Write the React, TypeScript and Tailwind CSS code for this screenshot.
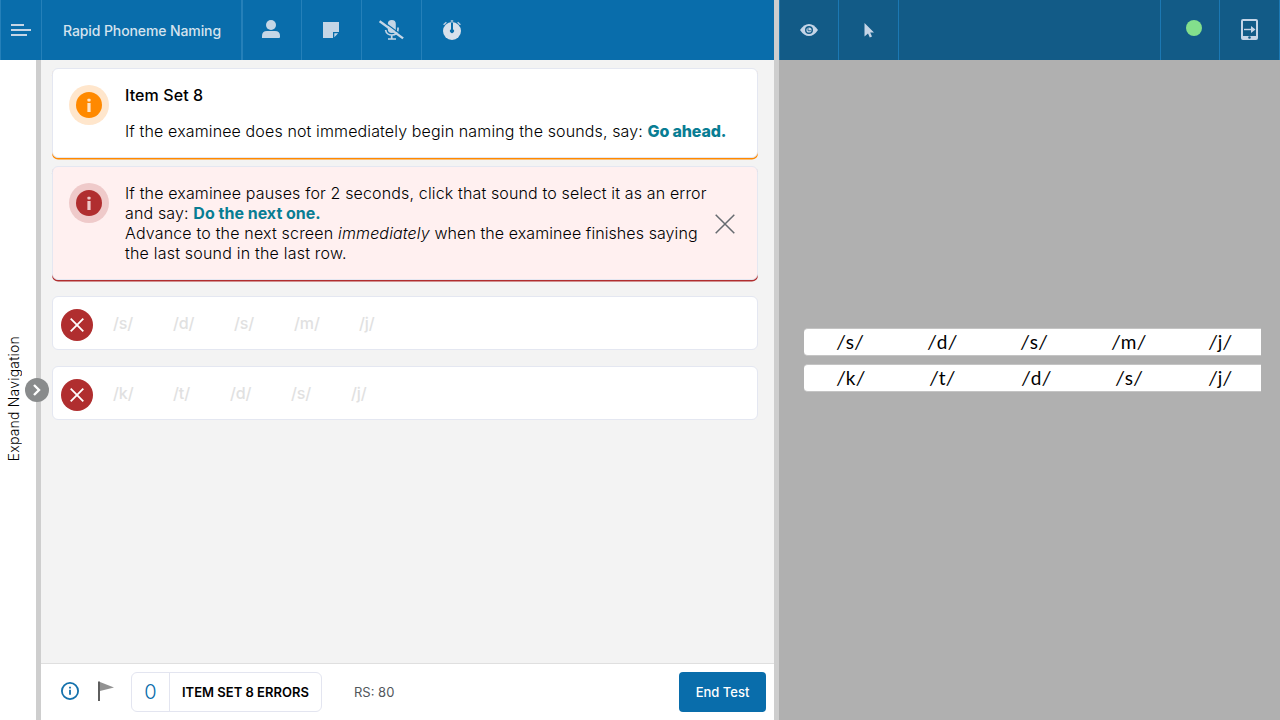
import React from 'react';

type Sound = { text: string; width: string };

const firstRow: Sound[] = [
  { text: '/s/', width: 'w-[60px]' },
  { text: '/d/', width: 'w-[61px]' },
  { text: '/s/', width: 'w-[60px]' },
  { text: '/m/', width: 'w-[65px]' },
  { text: '/j/', width: 'w-[30px]' },
];

const secondRow: Sound[] = [
  { text: '/k/', width: 'w-[60px]' },
  { text: '/t/', width: 'w-[57px]' },
  { text: '/d/', width: 'w-[61px]' },
  { text: '/s/', width: 'w-[60px]' },
  { text: '/j/', width: 'w-[30px]' },
];

function InfoBadge({ halo, fill, mark }: { halo: string; fill: string; mark: string }) {
  return (
    <div className={`flex size-10 shrink-0 items-center justify-center rounded-full ${halo}`}>
      <svg width="26" height="26" viewBox="0 0 26 26" className={fill}>
        <circle cx="13" cy="13" r="13" fill="currentColor" />
        <g className={mark} fill="currentColor">
          <rect x="11.4" y="6.8" width="3.2" height="2.8" rx="0.8" />
          <rect x="11.4" y="11" width="3.2" height="9" />
        </g>
      </svg>
    </div>
  );
}

function SoundRow({ sounds }: { sounds: Sound[] }) {
  return (
    <div className="flex h-[54px] items-center rounded-md border border-[#e4e7f1] bg-white pl-2">
      <button className="mt-[3px] flex size-8 shrink-0 items-center justify-center rounded-full bg-[#b02e2f]">
        <svg width="14" height="14" viewBox="0 0 14 14" stroke="#fff" strokeWidth="1.8">
          <path d="M.7.7l12.6 12.6M13.3.7L.7 13.3" />
        </svg>
      </button>
      <div className="ml-5 flex text-[16px] leading-5 font-medium tracking-[-0.1px] text-[#e1e1e1]">
        {sounds.map((s, i) => (
          <span key={i} className={s.width}>{s.text}</span>
        ))}
      </div>
    </div>
  );
}

function StimulusRow({ items }: { items: Sound[] }) {
  return (
    <div className="flex h-7 w-[457px] items-center rounded-l-[4px] border-y border-y-[#c4c4c4] bg-white pl-[33px] font-['Lato',sans-serif] text-[19px] leading-6 tracking-[0.9px] text-black">
      {items.map((s, i) => (
        <span key={i} className={`${s.width} shrink-0 whitespace-nowrap`}>
          <i>/</i>
          {s.text.slice(1, -1)}
          <i>/</i>
        </span>
      ))}
    </div>
  );
}

function TopBar() {
  return (
    <header className="flex h-[60px] shrink-0 bg-[#096dab] text-[#c5d6e6]">
      <div className="flex w-[42px] items-center border-x border-[#2580b9] pl-[10px]">
        <svg width="20" height="12" viewBox="0 0 20 12" fill="currentColor">
          <path d="M0 0h13v2H0zM0 5h20v2H0zM0 10h16v2H0z" />
        </svg>
      </div>
      <div className="flex w-[201px] items-center border-r-2 border-[#2580b9] pt-px pl-[21px] text-[14px] font-medium tracking-[-0.1px] whitespace-nowrap text-[#d5e3ee]">
        Rapid Phoneme Naming
      </div>
      <div className="flex w-[59px] items-center justify-center border-r border-[#2580b9] pr-[2px] pb-[2px]">
        <svg width="18" height="18" viewBox="0 0 18 18" fill="currentColor">
          <circle cx="9" cy="5" r="5" />
          <path d="M0 18v-2q0-5 5-5h8q5 0 5 5v1q0 1-1 1z" />
        </svg>
      </div>
      <div className="flex w-[60px] items-center justify-center border-r border-[#2580b9] pr-px">
        <svg width="16" height="16" viewBox="0 0 16 16" fill="currentColor">
          <path d="M0 0h16v10h-6v6H0z" />
          <path d="M11.3 15.2v-3.9h3.9z" />
        </svg>
      </div>
      <div className="flex w-[60px] items-center justify-center border-r border-[#2580b9] pr-px">
        <svg width="25" height="20" viewBox="0 0 25 20" fill="none" stroke="currentColor">
          <rect x="8.8" y="0" width="8" height="13" rx="4" fill="currentColor" stroke="none" />
          <path d="M6.6 10c.8 6.8 12.4 6.8 12.4-.8V7.5M12.7 15v3.5M9 19h8" strokeWidth="1.7" />
          <path d="M2.3 0l23 17" stroke="#096dab" strokeWidth="1.2" />
          <path d="M.6 1.2l23.5 17.2" strokeWidth="2.4" />
        </svg>
      </div>
      <div className="flex w-[60px] items-center justify-center">
        <svg width="18" height="20" viewBox="0 0 18 20" fill="#d7e0eb">
          <circle cx="9" cy="11" r="9" />
          <path d="M.6 4.8l2.8-2.5M17.4 4.8l-2.8-2.5M7.8 1h2.4" stroke="#b9cce0" strokeWidth="1.5" />
          <path d="M8 2.6h2v6.6a2 2 0 1 1-2 0z" fill="#096dab" />
        </svg>
      </div>
    </header>
  );
}

function Sidebar() {
  return (
    <nav className="relative flex w-[41px] shrink-0 items-center justify-center border-r-[5px] border-[#cecece] bg-white">
      <span className="mt-[17px] mr-[8px] rotate-180 text-[14px] leading-4 font-light tracking-[0.2px] whitespace-nowrap text-black [writing-mode:vertical-rl]">
        Expand Navigation
      </span>
      <button className="absolute top-[318px] left-[25px] z-10 flex size-6 items-center justify-center rounded-full bg-[#898b8c]">
        <svg width="8" height="12" viewBox="0 0 8 12" fill="none" stroke="#fff" strokeWidth="2.4">
          <path d="M1 1l5 5-5 5" />
        </svg>
      </button>
    </nav>
  );
}

function Footer() {
  return (
    <footer className="flex h-[57px] shrink-0 items-center border-t border-[#dfdfdf] bg-white pr-2 pl-5">
      <svg width="18" height="18" viewBox="0 0 18 18" fill="none" stroke="#1471ac" strokeWidth="1.8" className="-mt-0.5">
        <circle cx="9" cy="9" r="8.1" />
        <path d="M9 7.8v5M9 4.8v1.7" />
      </svg>
      <svg width="16" height="20" viewBox="0 0 16 20" className="-mt-0.5 ml-[19px]">
        <path d="M2 1l14 5.5L2 10z" fill="#929292" />
        <path d="M0 .5h2V20H0z" fill="#5e5e5e" />
      </svg>
      <div className="ml-[17px] flex h-10 w-[191px] items-center rounded-md border border-[#e3e5f0]">
        <div className="flex h-full w-[38px] items-center justify-center border-r border-[#e3e5f0] text-[20px] font-light text-[#096dab]">0</div>
        <div className="pl-3 pt-px text-[13px] font-semibold whitespace-nowrap text-black">ITEM SET 8 ERRORS</div>
      </div>
      <div className="ml-8 pt-px text-[13px] font-normal text-[#52575c]">RS: 80</div>
      <button className="ml-auto h-10 w-[87px] rounded-[4px] bg-[#096dab] pt-px text-[13px] font-medium text-white">End Test</button>
    </footer>
  );
}

export default function App() {
  return (
    <div className="flex h-[720px] w-[1280px] overflow-hidden bg-white font-['Inter',sans-serif]">
      <section className="flex w-[774px] shrink-0 flex-col">
        <TopBar />
        <div className="flex min-h-0 flex-1">
          <Sidebar />
          <div className="flex w-[733px] flex-col bg-[#f3f3f3]">
            <main className="flex flex-1 flex-col pt-2 pr-4 pl-[11px] text-[16px] leading-5 font-light text-black">
              <div className="flex h-[90px] rounded-md border border-[#e4e7f1] bg-white pt-4 pl-4 shadow-[0_1.4px_0_#ff8900]">
                <InfoBadge halo="bg-[#ffe6cc]" fill="text-[#ff8900]" mark="text-[#ffe6cc]" />
                <div className="ml-4 whitespace-nowrap">
                  <h1 className="font-medium tracking-[0.1px]">Item Set 8</h1>
                  <p className="mt-4 tracking-[0.13px]">
                    If the examinee does not immediately begin naming the sounds, say:{' '}
                    <b className="font-extrabold tracking-[-0.15px] text-[#087d93]">Go ahead.</b>
                  </p>
                </div>
              </div>
              <div className="mt-2 flex h-[114px] rounded-md border border-[#e4e7f1] bg-[#fff0f0] pt-4 pl-4 shadow-[0_1.4px_0_#b02e2f]">
                <InfoBadge halo="bg-[#efcaca]" fill="text-[#b02e2f]" mark="text-[#efcaca]" />
                <p className="ml-4 w-[590px] tracking-[0.145px] whitespace-nowrap">
                  If the examinee pauses for 2 seconds, click that sound to select it as an error
                  <br />
                  and say: <b className="font-bold tracking-normal text-[#087d93]">Do the next one.</b>
                  <br />
                  <span className="tracking-[0.18px]">Advance to the next screen </span>
                  <i>immediately</i>
                  <span className="tracking-[0.08px]"> when the examinee finishes saying</span>
                  <br />
                  <span className="tracking-[0.2px]">the last sound in the last row.</span>
                </p>
                <svg width="20" height="20" viewBox="0 0 20 20" stroke="#666b70" strokeWidth="1.5" className="mt-[31px] shrink-0">
                  <path d="M.7.7l18.6 18.6M19.3.7L.7 19.3" />
                </svg>
              </div>
              <div className="mt-4 flex flex-col gap-4">
                <SoundRow sounds={firstRow} />
                <SoundRow sounds={secondRow} />
              </div>
            </main>
            <Footer />
          </div>
        </div>
      </section>
      <div className="w-[5px] shrink-0 bg-[#cecece]" />
      <section className="flex w-[501px] flex-col bg-[#b0b0b0]">
        <header className="flex h-[60px] shrink-0 bg-[#125b87] text-[#c5d5e7]">
          <div className="flex w-[60px] items-center justify-center border-x border-[#1c78b3]">
            <svg width="18" height="12" viewBox="0 0 18 12" fill="currentColor">
              <path d="M0 6q4-6 9-6t9 6q-4 6-9 6T0 6z" />
              <circle cx="9" cy="6" r="3.3" fill="none" stroke="#125b87" strokeWidth="1.4" />
              <path d="M9 4.2v2h2A2 2 0 1 1 9 4z" />
              <path d="M8 3.4v3.3h3.3" fill="none" stroke="#125b87" strokeWidth=".8" />
            </svg>
          </div>
          <div className="flex w-[60px] items-center justify-center border-r border-[#1c78b3]">
            <svg width="10" height="15" viewBox="0 0 10 15" fill="currentColor">
              <path d="M.5 0L10 9.5H6.2l1.8 4-2.2 1-1.8-4L.5 13.5z" />
            </svg>
          </div>
          <div className="ml-auto flex w-[60px] items-center border-x border-[#1c78b3] pb-1 pl-[25px]">
            <span className="size-4 rounded-full bg-[#83df8c]" />
          </div>
          <div className="flex w-[60px] items-center justify-center border-r border-[#1c78b3] pb-px">
            <svg width="17" height="21" viewBox="0 0 17 21" fill="none" stroke="currentColor">
              <path d="M2 1h13q1 0 1 1v17q0 1-1 1H2q-1 0-1-1V2q0-1 1-1z" strokeWidth="2" />
              <path d="M1 18.5h15" strokeWidth="3" />
              <path d="M2 2.5h13" stroke="#125b87" strokeWidth=".8" />
              <path d="M3 10.5h9" strokeWidth="1.4" />
              <path d="M10 7l4.5 3.5L10 14z" fill="currentColor" stroke="none" />
              <circle cx="8.5" cy="18.5" r="1.3" fill="#125b87" stroke="none" />
            </svg>
          </div>
        </header>
        <div className="flex flex-col gap-2 pt-[268px] pl-[25px]">
          <StimulusRow
            items={[
              { text: '/s/', width: 'w-[91px]' },
              { text: '/d/', width: 'w-[93px]' },
              { text: '/s/', width: 'w-[91px]' },
              { text: '/m/', width: 'w-[97px]' },
              { text: '/j/', width: 'w-[30px]' },
            ]}
          />
          <StimulusRow
            items={[
              { text: '/k/', width: 'w-[93px]' },
              { text: '/t/', width: 'w-[92px]' },
              { text: '/d/', width: 'w-[94px]' },
              { text: '/s/', width: 'w-[93px]' },
              { text: '/j/', width: 'w-[30px]' },
            ]}
          />
        </div>
      </section>
    </div>
  );
}
